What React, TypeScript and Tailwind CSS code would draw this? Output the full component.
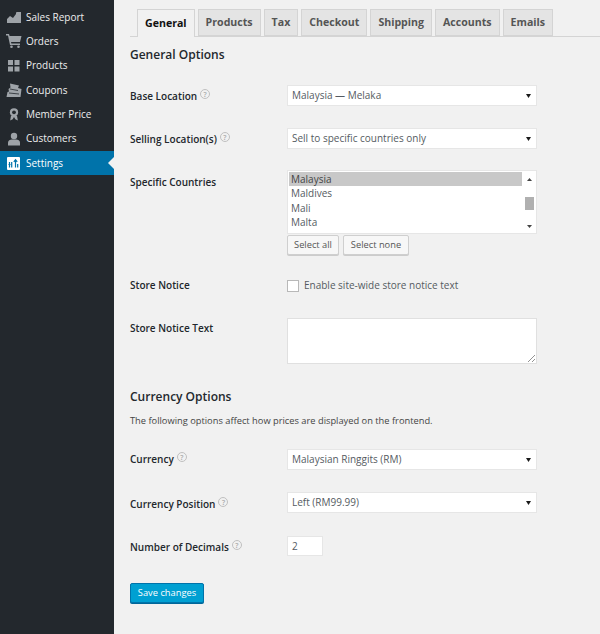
import type { ReactNode } from "react"

const font = { fontFamily: '"Open Sans", sans-serif' }

function ChartIcon() {
  return (
    <svg width="16" height="14" viewBox="0 0 16 14" fill="#9ea3a8">
      <path d="M1 13 V9 L4 6 L7 8 L10 4 V2.5 L11 2 H15 V13 Z" />
    </svg>
  )
}

function CartIcon() {
  return (
    <svg width="16" height="14" viewBox="0 0 16 14" fill="#9ea3a8">
      <path d="M0 0 H3 L3.6 2 H15.5 L14 8 H5 L5.4 9.5 H14 V11 H4 L2 1.5 H0 Z" />
      <circle cx="5.5" cy="12.7" r="1.3" />
      <circle cx="12.5" cy="12.7" r="1.3" />
    </svg>
  )
}

function GridIcon() {
  return (
    <svg width="14" height="14" viewBox="0 0 14 14" fill="#9ea3a8">
      <rect x="1" y="1" width="5" height="5" />
      <rect x="7.5" y="1" width="5" height="5" />
      <rect x="1" y="7.5" width="5" height="5" />
      <rect x="7.5" y="7.5" width="5" height="5" />
    </svg>
  )
}

function CouponIcon() {
  return (
    <svg width="16" height="15" viewBox="0 0 16 15" fill="#9ea3a8">
      <path d="M4 0.5 L13 2.5 L12 5 L15.5 6 L15 10 L14.5 14 H0.5 L1.5 9 L3 8.5 L2.5 6 L4.5 4.5 Z" />
      <path d="M4 6 L12 7.5 M3 10 L13 11" stroke="#23282d" strokeWidth="0.8" />
    </svg>
  )
}

function RibbonIcon() {
  return (
    <svg width="12" height="15" viewBox="0 0 14 15" fill="#9ea3a8">
      <circle cx="7" cy="5" r="4.8" />
      <circle cx="7" cy="5" r="2.2" fill="#23282d" />
      <path d="M3.5 9 L2.5 14.5 L5.5 13 L7 10.5 L8.5 13 L11.5 14.5 L10.5 9 Z" />
    </svg>
  )
}

function UserIcon() {
  return (
    <svg width="14" height="14" viewBox="0 0 14 14" fill="#9ea3a8">
      <circle cx="7" cy="4" r="3.2" />
      <path d="M1 13.5 V10.5 C1 8.5 3 7.5 5 7.5 H9 C11 7.5 13 8.5 13 10.5 V13.5 Z" />
    </svg>
  )
}

function SettingsIcon() {
  return (
    <svg width="13" height="13" viewBox="0 0 13 13">
      <rect width="13" height="13" rx="1" fill="#fff" />
      <path d="M2.5 5 V10.5 M4.7 5 V10.5 M1.5 7.5 H3.5" stroke="#0073aa" strokeWidth="1.2" />
      <path d="M8.5 10.5 V3 M6.8 4.8 L8.5 2.8 L10.2 4.8 M10.7 7 V10.5" stroke="#0073aa" strokeWidth="1.2" fill="none" />
    </svg>
  )
}

const menu: { label: string; icon: ReactNode; active?: boolean }[] = [
  { label: "Sales Report", icon: <ChartIcon /> },
  { label: "Orders", icon: <CartIcon /> },
  { label: "Products", icon: <GridIcon /> },
  { label: "Coupons", icon: <CouponIcon /> },
  { label: "Member Price", icon: <RibbonIcon /> },
  { label: "Customers", icon: <UserIcon /> },
  { label: "Settings", icon: <SettingsIcon />, active: true },
]

const tabs = ["General", "Products", "Tax", "Checkout", "Shipping", "Accounts", "Emails"]

function Help() {
  return (
    <span className="ml-[3px] mb-[5px] inline-flex h-[10px] w-[10px] items-center justify-center rounded-full border border-[#c0c0c0] text-[7px] leading-none text-[#aaaaaa]">
      ?
    </span>
  )
}

function Label({ children, help, top }: { children: string; help?: boolean; top: string }) {
  return (
    <div className={`flex w-[157px] shrink-0 items-center text-[10px] font-semibold text-[#23282d] ${top}`}>
      <span>{children}</span>
      {help && <Help />}
    </div>
  )
}

function Select({ value }: { value: string }) {
  return (
    <div className="flex h-[21px] w-[250px] items-center justify-between border border-[#e6e6e6] bg-white pl-[4px] pr-[4px] text-[10px] text-[#555b62]">
      <span>{value}</span>
      <svg width="5" height="4" viewBox="0 0 5 4" className="mr-[1px]">
        <path d="M0 0 H5 L2.5 4 Z" fill="#1a1a1a" />
      </svg>
    </div>
  )
}

function Row({
  label,
  help,
  top = "pt-[4px]",
  className,
  children,
}: {
  label: string
  help?: boolean
  top?: string
  className: string
  children: ReactNode
}) {
  return (
    <div className={`flex items-start ${className}`}>
      <Label help={help} top={top}>
        {label}
      </Label>
      {children}
    </div>
  )
}

function SmallButton({ children, width }: { children: string; width: string }) {
  return (
    <button className={`h-[20px] ${width} rounded-[2px] border border-[#cfcfcf] bg-[#f7f7f7] text-[9.3px] text-[#555] shadow-[0_1px_0_#ccc]`}>
      {children}
    </button>
  )
}

export default function App() {
  return (
    <div className="flex h-[634px] w-[600px] overflow-hidden bg-[#f1f1f1]" style={font}>
      <aside className="h-full w-[114px] shrink-0 bg-[#23282d] pt-[5px]">
        {menu.map((item) => (
          <div
            key={item.label}
            className={`relative flex h-[24.33px] items-center text-[10px] text-[#eeeeee] ${item.active ? "bg-[#0073aa] text-white" : ""}`}
          >
            <span className="flex w-[26px] shrink-0 justify-center pl-[1px]">{item.icon}</span>
            <span>{item.label}</span>
            {item.active && (
              <span className="absolute right-0 top-[6px] h-0 w-0 border-y-[6px] border-r-[6px] border-y-transparent border-r-[#f1f1f1]" />
            )}
          </div>
        ))}
      </aside>

      <main className="min-w-0 flex-1 pl-[16px]">
        <div className="mt-[9px] flex h-[28px] w-[470px] items-end gap-[3px] border-b border-[#d4d4d4] pl-[7px]">
          {tabs.map((tab, i) => (
            <div
              key={tab}
              className={`flex h-[27px] items-center border border-[#d4d4d4] px-[7px] text-[10.6px] font-bold ${
                i === 0 ? "relative top-[1px] h-[28px] border-b-0 bg-[#f1f1f1] text-[#111]" : "bg-[#e4e4e4] text-[#555]"
              }`}
            >
              {tab}
            </div>
          ))}
        </div>

        <h2 className="mt-[9px] text-[12px] font-semibold leading-[18px] text-[#23282d]">General Options</h2>

        <Row label="Base Location" help className="mt-[21px]">
          <Select value="Malaysia — Melaka" />
        </Row>
        <Row label="Selling Location(s)" help className="mt-[22px]">
          <Select value="Sell to specific countries only" />
        </Row>

        <Row label="Specific Countries" top="pt-[5px]" className="mt-[21px]">
          <div>
            <div className="flex h-[64px] w-[250px] border border-[#e6e6e6] bg-white pt-[1px] pl-[1px] text-[10px] leading-[14.3px] text-[#555b62]">
              <div className="flex-1">
                <div className="bg-[#c8c8c8] pl-[2px] text-[#444]">Malaysia</div>
                <div className="pl-[2px]">Maldives</div>
                <div className="pl-[2px]">Mali</div>
                <div className="pl-[2px]">Malta</div>
              </div>
              <div className="relative w-[14px]">
                <svg width="5" height="3" viewBox="0 0 7 4" className="absolute left-[5px] top-[6px]">
                  <path d="M3.5 0 L7 4 H0 Z" fill="#444" />
                </svg>
                <div className="absolute left-[3px] top-[25px] h-[13px] w-[9px] bg-[#b0b0b0]" />
                <svg width="5" height="3" viewBox="0 0 7 4" className="absolute bottom-[5px] left-[5px]">
                  <path d="M0 0 H7 L3.5 4 Z" fill="#444" />
                </svg>
              </div>
            </div>
            <div className="mt-[1px] flex gap-[4px]">
              <SmallButton width="w-[52px]">Select all</SmallButton>
              <SmallButton width="w-[66px]">Select none</SmallButton>
            </div>
          </div>
        </Row>

        <Row label="Store Notice" top="pt-0" className="mt-[23px]">
          <div className="flex items-center text-[10px] text-[#555b62]">
            <span className="h-[12px] w-[12px] border border-[#b8b8b8] bg-white" />
            <span className="ml-[5px]">Enable site-wide store notice text</span>
          </div>
        </Row>

        <Row label="Store Notice Text" top="pt-[3px]" className="mt-[25px]">
          <div className="relative h-[46px] w-[250px] border border-[#e0e0e0] bg-white">
            <svg width="7" height="7" viewBox="0 0 7 7" className="absolute bottom-[1px] right-[1px]">
              <path d="M0 7 L7 0 M4 7 L7 4" stroke="#777" strokeWidth="0.8" />
            </svg>
          </div>
        </Row>

        <h2 className="mt-[24px] text-[12px] font-semibold leading-[18px] text-[#23282d]">Currency Options</h2>
        <p className="mt-[8px] text-[9.3px] leading-[14px] text-[#444]">
          The following options affect how prices are displayed on the frontend.
        </p>

        <Row label="Currency" help top="pt-[3px]" className="mt-[21px]">
          <Select value="Malaysian Ringgits (RM)" />
        </Row>
        <Row label="Currency Position" help top="pt-[5px]" className="mt-[22px]">
          <Select value="Left (RM99.99)" />
        </Row>
        <Row label="Number of Decimals" help className="mt-[23px]">
          <div className="flex h-[20px] w-[36px] items-center border border-[#e6e6e6] bg-white pl-[4px] text-[10px] text-[#555b62]">
            2
          </div>
        </Row>

        <button className="mt-[27px] flex h-[20px] w-[74px] items-center justify-center rounded-[2px] border border-[#0073aa] bg-[#00a0d2] text-[9.3px] text-white shadow-[0_1px_0_#006799]">
          Save changes
        </button>
      </main>
    </div>
  )
}
